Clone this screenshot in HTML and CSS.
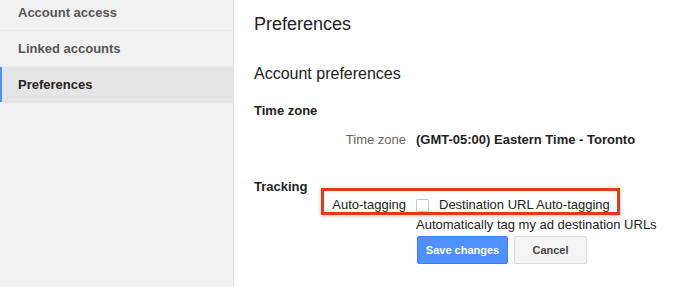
FILE: index.html
```html
<!DOCTYPE html>
<html>
<head>
<meta charset="utf-8">
<link rel="stylesheet" href="styles.css">
</head>
<body>
<div class="page">
  <nav class="sidebar">
    <div class="nav-item">Account access</div>
    <div class="nav-item">Linked accounts</div>
    <div class="nav-item active">Preferences</div>
  </nav>
  <main class="main">
    <h1 class="title">Preferences</h1>
    <h2 class="subtitle">Account preferences</h2>
    <h3 class="section">Time zone</h3>
    <div class="row tz-row">
      <div class="label">Time zone</div>
      <div class="value strong">(GMT-05:00) Eastern Time - Toronto</div>
    </div>
    <h3 class="section tracking">Tracking</h3>
    <div class="row tag-row">
      <div class="label">Auto-tagging</div>
      <div class="value check"><span class="box"></span>Destination URL Auto-tagging</div>
      <div class="highlight"></div>
    </div>
    <div class="row help-row">
      <div class="label"></div>
      <div class="value">Automatically tag my ad destination URLs</div>
    </div>
    <div class="row btn-row">
      <div class="label"></div>
      <div class="value buttons">
        <button class="btn primary">Save changes</button>
        <button class="btn">Cancel</button>
      </div>
    </div>
  </main>
</div>
</body>
</html>
```

FILE: styles.css
```css
html, body {
  margin: 0;
  padding: 0;
  background: #fff;
  font-family: "Liberation Sans", Arial, sans-serif;
  font-size: 13px;
  color: #222;
  overflow: hidden;
}
.page {
  display: flex;
  height: 287px;
}
.sidebar {
  width: 233px;
  flex: none;
  background: #f1f1f1;
  border-right: 1px solid #e3e3e3;
  margin-top: -5px;
  height: 292px;
}
.nav-item {
  height: 35px;
  line-height: 35px;
  border-bottom: 1px solid #e8e8e8;
  padding-left: 18px;
  font-weight: bold;
  color: #555;
}
.nav-item.active {
  background: #e5e5e5;
  color: #222;
  box-shadow: inset 2px 0 0 #4d90fe;
}
.main {
  flex: 1;
  padding-left: 20px;
}
.title {
  margin: 13px 0 0;
  font-size: 18px;
  line-height: 22px;
  font-weight: normal;
  color: #222;
}
.subtitle {
  margin: 29px 0 0;
  font-size: 16px;
  line-height: 20px;
  font-weight: normal;
  color: #222;
}
.section {
  margin: 19px 0 0;
  font-size: 13px;
  line-height: 16px;
  font-weight: bold;
  color: #222;
}
.section.tracking {
  margin-top: 31px;
}
.row {
  display: grid;
  grid-template-columns: 152px 1fr;
  column-gap: 10px;
  line-height: 16px;
  position: relative;
}
.label {
  text-align: right;
  color: #666;
}
.tag-row .label {
  color: #222;
}
.strong {
  font-weight: bold;
}
.tz-row {
  margin-top: 13px;
}
.tag-row {
  margin-top: 2px;
}
.check {
  display: flex;
  align-items: center;
}
.box {
  display: inline-block;
  width: 11px;
  height: 11px;
  border: 1px solid #c6c6c6;
  border-radius: 1px;
  background: #fff;
  margin: 0 10px 0 0;
}
.highlight {
  position: absolute;
  left: 67px;
  top: -9px;
  width: 293px;
  height: 21px;
  border: 3px solid #dc3b1f;
  box-shadow: 0 1px 4px rgba(0,0,0,0.25);
  pointer-events: none;
}
.help-row {
  margin-top: 4px;
}
.help-row .value {
  color: #222;
}
.btn-row {
  margin-top: 3px;
}
.buttons {
  display: flex;
  gap: 6px;
  padding-left: 1px;
}
.btn {
  box-sizing: border-box;
  height: 28px;
  padding: 0;
  width: 73px;
  white-space: nowrap;
  font-family: "Liberation Sans", Arial, sans-serif;
  font-size: 11px;
  font-weight: bold;
  color: #444;
  background: #f5f5f5;
  border: 1px solid #dcdcdc;
  border-radius: 2px;
}
.btn.primary {
  width: 91px;
  background: #4d90fe;
  border-color: #3d82f0;
  color: #fff;
}
```
